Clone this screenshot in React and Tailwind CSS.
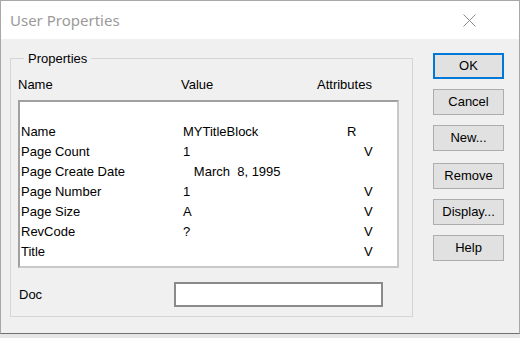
import React from 'react';

const rows = [
  { name: 'Name', value: 'MYTitleBlock', attr: 'R' },
  { name: 'Page Count', value: '1', attr: 'V' },
  { name: 'Page Create Date', value: '   March  8, 1995', attr: '' },
  { name: 'Page Number', value: '1', attr: 'V' },
  { name: 'Page Size', value: 'A', attr: 'V' },
  { name: 'RevCode', value: '?', attr: 'V' },
  { name: 'Title', value: '', attr: 'V' },
];

const buttons = ['OK', 'Cancel', 'New...', 'Remove', 'Display...', 'Help'];

function DlgButton({ label, primary, extraTop }) {
  return (
    <button
      className={
        'w-[71px] h-[26px] bg-[#e1e1e1] text-[13px] text-black ' +
        (primary ? 'border-2 border-[#0078d7] ' : 'border border-[#adadad] ') +
        (extraTop ? 'mt-[2px]' : '')
      }
    >
      {label}
    </button>
  );
}

export default function App() {
  return (
    <div className="w-[520px] h-[338px] bg-[#e6e6e6] font-['Liberation_Sans',Arial,sans-serif] text-[13px] text-black">
      <div className="w-[520px] h-[334px] border border-[#a8a8a8] border-b-[#707070] flex flex-col">
        {/* title bar */}
        <div className="h-[38px] bg-white flex items-center justify-between pl-[9px] pr-[43px]">
          <span className="font-['Noto_Sans',sans-serif] text-[15px] text-[#9a9a9a]">User Properties</span>
          <svg width="13" height="13" viewBox="0 0 13 13">
            <path d="M0.5 0.5 L12.5 12.5 M12.5 0.5 L0.5 12.5" stroke="#8a8a8a" strokeWidth="1" fill="none" />
          </svg>
        </div>

        {/* body */}
        <div className="flex-1 bg-[#f0f0f0] flex pt-[12px] pl-[9px]">
          <fieldset className="w-[403px] h-[266px] border border-[#d5d5d5] px-[7px] pt-[8px]">
            <legend className="ml-[6px] px-[4px] leading-[15px]">Properties</legend>
            <div className="flex h-[26px] items-start pt-[1px]">
              <span className="w-[163px]">Name</span>
              <span className="w-[136px]">Value</span>
              <span>Attributes</span>
            </div>
            <div className="w-[381px] h-[168px] bg-white border-2 border-t-[#a0a0a0] border-l-[#a0a0a0] border-r-[#c8c8c8] border-b-[#c8c8c8] pt-[20px]">
              {rows.map((r) => (
                <div key={r.name} className="flex h-[20px] items-center pl-[1px]">
                  <span className="w-[162px]">{r.name}</span>
                  <span className="w-[150px] whitespace-pre">{r.value}</span>
                  <span className={r.attr === 'R' ? 'ml-[14px]' : 'ml-[31px]'}>{r.attr}</span>
                </div>
              ))}
            </div>
            <div className="flex items-center mt-[14px]">
              <span className="w-[156px] pl-[1px]">Doc</span>
              <div className="w-[209px] h-[25px] bg-white border-2 border-[#8a8a8a]" />
            </div>
          </fieldset>

          <div className="flex flex-col gap-[10px] ml-[20px] mt-[2px]">
            {buttons.map((b) => (
              <DlgButton key={b} label={b} primary={b === 'OK'} extraTop={b === 'Remove'} />
            ))}
          </div>
        </div>
      </div>
    </div>
  );
}
